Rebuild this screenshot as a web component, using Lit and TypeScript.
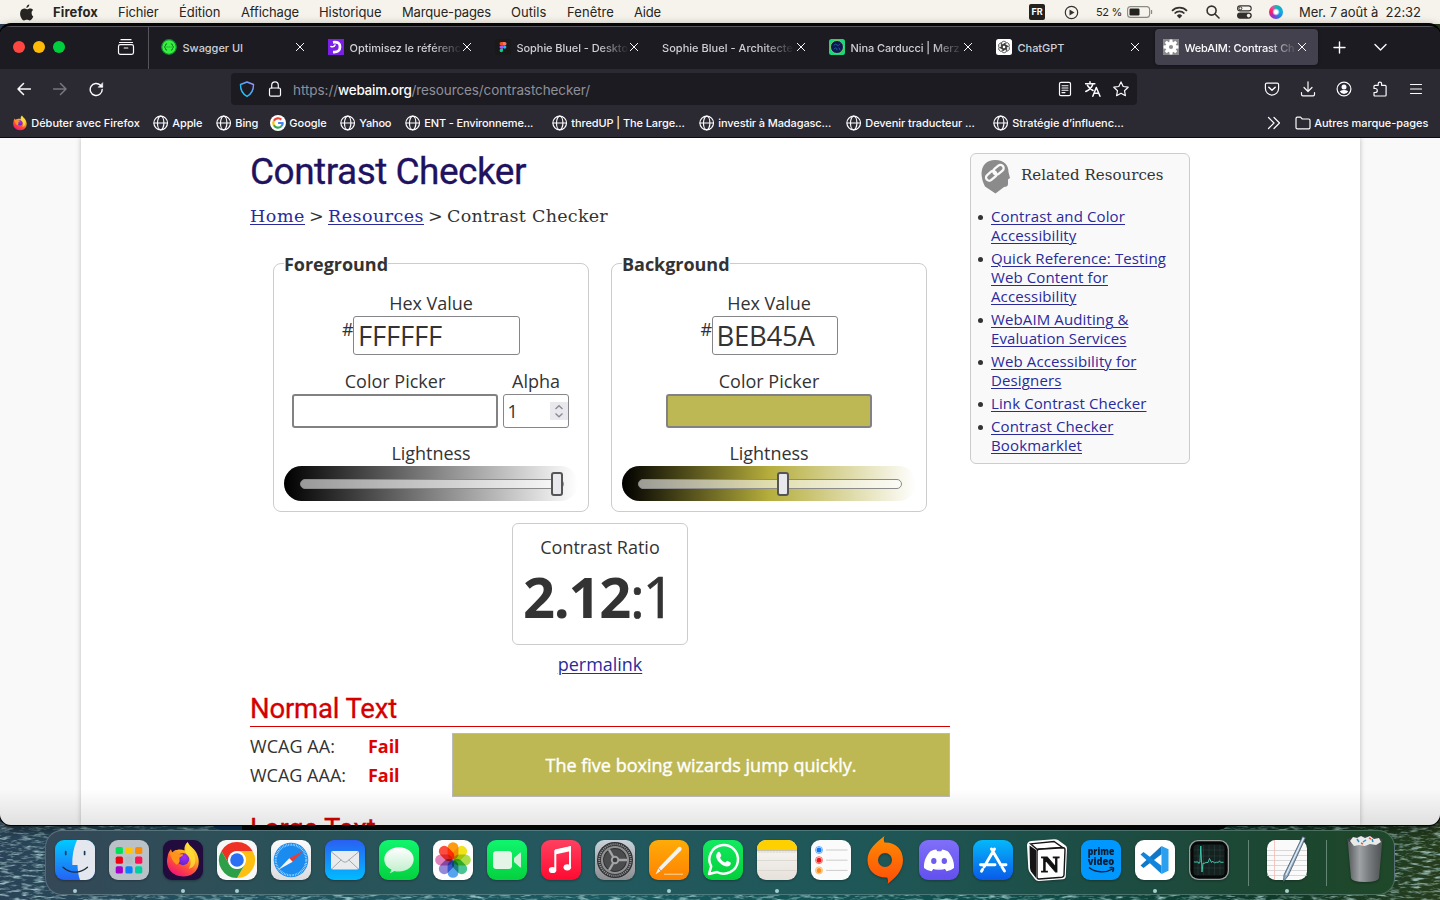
import { LitElement, html, css, svg, nothing } from "lit";
import { customElement, property } from "lit/decorators.js";

/** A single line of text whose tracking is adjusted to span a given width. */
@customElement("fit-text")
class FitText extends LitElement {
  @property() text = "";
  @property({ type: Number }) w = 0;
  static styles = css`
    :host { display: inline-block; white-space: nowrap; }
    .t { white-space: pre; }
  `;
  render() {
    return html`<span class="t">${this.text}</span>`;
  }
  firstUpdated() {
    const span = this.renderRoot.querySelector(".t") as HTMLElement;
    const natural = span.getBoundingClientRect().width;
    if (this.w && natural) span.style.letterSpacing = `${(this.w - natural) / this.text.length}px`;
  }
}
const fit = (text: string, w: number, cls = "") => html`<fit-text class=${cls} .text=${text} .w=${w}></fit-text>`;

const icon = (w: number, h: number, body: unknown) =>
  html`<svg class="ic" width=${w} height=${h} viewBox="0 0 ${w} ${h}" fill="none" stroke="currentColor" stroke-width="1.2" stroke-linecap="round" stroke-linejoin="round">${body}</svg>`;

const closeIcon = icon(10, 10, svg`<path d="M1.300 1.300l7.400 7.400M8.700 1.300l-7.400 7.400" stroke-width="1"/>`);
const globe = icon(16, 16, svg`<circle cx="7.700" cy="8" r="6.800"/><ellipse cx="7.700" cy="8" rx="3.200" ry="6.800"/><path d="M1 8h13.400"/>`);
const firefoxSmall = html`<svg class="ic" width="16" height="16" viewBox="0 0 40 40">${foxBody()}</svg>`;
const google = icon(16, 16, svg`<circle cx="8" cy="8" r="8" fill="#fff" stroke="none"/>
  <g stroke-width="2.2" stroke-linecap="butt"><path d="M11.300 4.600A4.700 4.700 0 0 0 3.900 5.700" stroke="#ea4335"/><path d="M3.900 5.700a4.800 4.800 0 0 0 0 4.700" stroke="#fbbc05"/><path d="M3.900 10.300a4.700 4.700 0 0 0 7.200 1.200" stroke="#34a853"/><path d="M11.100 11.500A4.600 4.600 0 0 0 12.700 8H8.100" stroke="#4285f4"/></g>`);

function foxBody() {
  return svg`
  <defs>
    <linearGradient id="fxa" x1=".8" y1="0" x2=".25" y2="1"><stop offset="0" stop-color="#fff44f"/><stop offset=".35" stop-color="#ffb01f"/><stop offset=".65" stop-color="#ff4f3a"/><stop offset="1" stop-color="#f0107a"/></linearGradient>
    <radialGradient id="fxb" cx=".6" cy=".35" r=".7"><stop offset="0" stop-color="#a52af5"/><stop offset="1" stop-color="#5a25c8"/></radialGradient>
  </defs>
  <path d="M25 1.500c1 4 6 6 9 11 6 11 2 25-13.500 25.500C7 38 .8 27 3.500 17c.5-4 2-6 3.500-8l1.500 3.500c2-2 3-2.500 5-2.500 2.500-1 5.500-.5 8 .5-.5-4 1-7 3.500-9z" fill="url(#fxa)"/>
  <circle cx="20" cy="19.500" r="6.500" fill="url(#fxb)"/>
  <path d="M6 13c4-2 7 0 9 1.500h5c0 2-3 2.500-4 4 1 5-1 6-3 7-4-3-6-8-7-12.500z" fill="#ff9518"/>
  <path d="M26 3c1 7 8 10 7 19-1 5-4 7-7 8 3-5 3-11-2-15-3-3-1-9 2-12z" fill="#ffe037" opacity=".8"/>`;
}

const tile = (body: unknown, bg: string, stops?: [string, string], id = "") => svg`
  ${stops ? svg`<defs><linearGradient id=${id} x1="0" y1="0" x2="0" y2="1"><stop offset="0" stop-color=${stops[0]}/><stop offset="1" stop-color=${stops[1]}/></linearGradient></defs>` : nothing}
  <rect width="40" height="40" rx="9" fill=${stops ? `url(#${id})` : bg}/>${body}`;

const range = (n: number) => Array.from({ length: n }, (_, i) => i);
const padColors = ["#00df55", "#ffc500", "#ff8a00", "#ef0012", "#b3bcc1", "#ff0f55", "#a300c9", "#0a80ff", "#00cfa0"];
const petals = ["#ff9500", "#f2e20a", "#a8dc3a", "#3cc28e", "#4c9df0", "#8f80d8", "#e07ab8", "#ff3f30"];

const dockIcons: { body: unknown; on?: boolean; sep?: boolean }[] = [
  { on: true, body: tile(svg`<path d="M22 0h9a9 9 0 0 1 9 9v22a9 9 0 0 1-9 9h-6c-1.500-4-2.300-9-2.500-15H17.300C17 16 18.500 8 22 0z" fill="#e4e8ee"/>
      <path d="M10.700 11.500v3M29.600 11.500v3" stroke="#173a5c" stroke-width="1.700" stroke-linecap="round"/><path d="M8 27.200c7 6.500 17 6.500 24.500 0" fill="none" stroke="#1d2b3c" stroke-width="1.300" stroke-linecap="round"/>`, "", ["#00caff", "#2563f5"], "gfinder") },
  { body: tile(range(9).map((i) => svg`<rect x=${6.7 + (i % 3) * 9.7} y=${6.9 + Math.floor(i / 3) * 9.7} width="7.200" height="7.200" rx="1.600" fill=${padColors[i]}/>`), "#bac2c7") },
  { on: true, body: svg`<rect width="40" height="40" rx="9" fill="#220b3d"/><g transform="translate(1.300 .7) scale(.94)">${foxBody()}</g>` },
  { on: true, body: tile(svg`<path d="M4.400 11A18 18 0 0 1 35.600 11H20A9 9 0 0 0 12.200 24.500z" fill="#ee3124"/><path d="M35.600 11A18 18 0 0 1 20 38l7.800-13.500A9 9 0 0 0 20 11z" fill="#fdc010"/><path d="M20 38A18 18 0 0 1 4.400 11l7.800 13.500a9 9 0 0 0 15.600 0z" fill="#2c9f48"/><circle cx="20" cy="20" r="8.600" fill="#fff"/><circle cx="20" cy="20" r="6.800" fill="#2b6ff2"/>`, "#f7f7f7") },
  { body: tile(svg`<circle cx="20" cy="20" r="17.300" fill="#1a8cf0"/><circle cx="20" cy="20" r="15.300" fill="none" stroke="#d8efff" stroke-width="2.200" stroke-dasharray=".55 1.050"/><path d="M33 10.500 18.300 18.300l3.400 3.400z" fill="#f03a30"/><path d="M7 30l11.300-11.700 3.400 3.400z" fill="#f4f4f4"/>`, "", ["#fbfbfb", "#dcdcde"], "gsafari") },
  { body: tile(svg`<rect x="6" y="11" width="28" height="18.500" rx="2" fill="#e9ebec"/><path d="M6.500 12 18 21.500q2 1.500 4 0L33.500 12M6.800 28.800l9.500-9M33.200 28.800l-9.500-9" fill="none" stroke="#9ba3a8" stroke-width=".9"/>`, "", ["#2a5ff3", "#00bcff"], "gmail") },
  { body: tile(svg`<path d="M20 7.200c8.300 0 14.700 5.100 14.700 12S28.300 31.500 20 31.500c-1.800 0-3.400-.2-4.900-.6-1.200 1-2.600 1.900-4.400 2.200 1-1.200 1.600-2.200 1.800-3.500C8 27.500 5.300 24 5.300 19.200c0-6.900 6.400-12 14.700-12z" fill="url(#gbub)"/><defs><linearGradient id="gbub" x1="0" y1="0" x2="0" y2="1"><stop offset="0" stop-color="#fff"/><stop offset="1" stop-color="#bfeecb"/></linearGradient></defs>`, "", ["#10f56e", "#04d13e"], "gmsg") },
  { body: tile(svg`<g class="petals">${range(8).map((i) => svg`<rect x="14.600" y="2.200" width="10.800" height="17.500" rx="5.400" fill=${petals[i]} transform="rotate(${i * 45} 20 20)"/>`)}</g>`, "#fdfdfd") },
  { body: tile(svg`<rect x="6" y="11" width="19" height="18" rx="3.500" fill="#e4f5e8"/><path d="M27 18l6-5.300q1-.7 1 .5v13.600q0 1.200-1 .5L27 22z" fill="#d4efd9"/>`, "", ["#10f56e", "#04d13e"], "gft") },
  { body: tile(svg`<path d="M14.300 29V11L29 7.500v19" fill="none" stroke="#fff" stroke-width="2"/><path d="M14 9.500 30 6v5L14 14.500z" fill="#fff"/><ellipse cx="11.600" cy="30" rx="3.800" ry="3.100" fill="#fff"/><ellipse cx="26.300" cy="27.300" rx="3.800" ry="3.100" fill="#fff"/>`, "", ["#ff4060", "#ff0a30"], "gmus") },
  { body: tile(svg`<circle cx="20" cy="20" r="18" fill="#2f3032"/><circle cx="20" cy="20" r="15.800" fill="none" stroke="#8e8f91" stroke-width="2" stroke-dasharray="1.200 .9"/><circle cx="20" cy="20" r="13" fill="none" stroke="#8f9092" stroke-width="2.200"/><circle cx="20" cy="20" r="11" fill="#4a4b4d"/><path d="M20 20h12M20 20l-6-10.400M20 20l-6 10.400" stroke="#a2a4a6" stroke-width="2.300"/><circle cx="20" cy="20" r="4.200" fill="#a2a4a6"/><circle cx="20" cy="20" r="2.300" fill="#3a3a3c"/>`, "", ["#c9d2da", "#8c8d90"], "gset") },
  { on: true, body: tile(svg`<path d="M15 34.200h19" stroke="#ffd9a8" stroke-width="1"/><path d="M6.500 34.500l3-6.500L29.500 7q2-1 3 1 .5 1-.5 2.500L11.500 31z" fill="#f6f3ef"/><path d="M9.500 28l2.300 3" stroke="#b98a5a" stroke-width=".8"/>`, "", ["#ffab08", "#ff8200"], "gpages") },
  { body: tile(svg`<path d="M6 34l2.200-7.700A14.300 14.300 0 1 1 14 32z" fill="none" stroke="#fff" stroke-width="2.500" stroke-linejoin="round"/><path d="M14.500 12.500c1-1.200 2.200-.8 2.700.3l1 2.500c.4 1-1.300 2-1 2.600 1 2 2.800 3.700 4.900 4.500.7.300 1.700-1.800 2.500-1.500l2.700 1.300c1 .6.400 2.400-.5 3.200-1.700 1.400-4 1.200-6.400 0-3-1.500-5.200-3.800-6.500-6.400-1-2.300-1-4.800.6-6.500z" fill="#fff"/>`, "", ["#12ea60", "#04cf3a"], "gwa") },
  { on: true, body: tile(svg`<path d="M0 10V9a9 9 0 0 1 9-9h22a9 9 0 0 1 9 9v1z" fill="#ffd000"/><path d="M0 10.700h40" stroke="#b9b5a5" stroke-width="1"/><path d="M1 12.300h38" stroke="#c5c2ba" stroke-width=".7" stroke-dasharray=".7 .8"/><path d="M0 20.500h40M0 30.500h40" stroke="#d0cdc8" stroke-width=".6"/>`, "", ["#fbfaf7", "#e6e1da"], "gnotes") },
  { body: tile(["#0a78ff", "#f21616", "#ff9015"].map((c, i) => svg`<circle cx="8" cy=${10 + i * 10.2} r="3.500" fill="none" stroke=${c} stroke-width=".6"/><circle cx="8" cy=${10 + i * 10.2} r="2.500" fill=${c}/><path d="M15 ${10 + i * 10.2}h21.500" stroke="#ccc" stroke-width="1"/>`), "#fbfbfb") },
  { body: svg`<defs><linearGradient id="gor" x1="0" y1="0" x2="0" y2="1"><stop offset="0" stop-color="#ff8d00"/><stop offset="1" stop-color="#ff4d0a"/></linearGradient></defs><path d="M19.500-4c-1 2.500-1 4 0 6.500C30 2 38 9 38 20c0 11-8 18-15.500 24 .8-2.500.8-4-.3-6.500C11 38 2.500 31 2.500 20 2.500 9.500 11 2.500 19.500-4zM20 13a7 7 0 1 0 0 14 7 7 0 1 0 0-14z" fill="url(#gor)" fill-rule="evenodd"/>` },
  { body: tile(svg`<path d="M11.500 11.300q3-1.500 5.700-1.800l1 1.800h4l1-1.800q3 .4 5.500 1.800C33 16 35.500 22 35 28q-3.500 2.800-7.500 3.300l-1.800-2.800H14.500l-1.800 2.800Q8.500 31 5 28c-.3-6 1.800-12 6.500-16.700z" fill="#fff"/><ellipse cx="14.800" cy="21" rx="2.700" ry="3" fill="#6b5bf0"/><ellipse cx="25.300" cy="21" rx="2.700" ry="3" fill="#6b5bf0"/><path d="M12.500 27.500q7.500 3 15 0" fill="none" stroke="#fff" stroke-width="1.500"/>`, "", ["#7f6ff8", "#6350ee"], "gdis") },
  { body: tile(svg`<path d="M21.500 9 11 27M18.500 9 27 23.500M29 27l2.500 4M9.500 29.500l-1 1.800M7.500 24.700H22M27.500 24.700H33" stroke="#fff" stroke-width="2.900" stroke-linecap="round"/>`, "", ["#04b8fb", "#0a5ae8"], "gapp") },
  { body: svg`<path d="M0 5.500Q0 1.500 4 1L27-.8q2.500-.2 4 .8l7.500 5.500q1.500 1 1.500 3L38.800 36q0 3-3 3.200L12 41q-2.500.2-4-1.700L2.500 32Q1.500 30.500 1.300 28z" fill="#fff"/><path d="M2.500 5.500 9 10v28l-5-6.500Q3.200 30 3 28z" fill="#151515"/><path d="M3.500 3.900 27 1.500l8.500 6-25.500 1.800z" fill="#fff" stroke="#151515" stroke-width="1.400"/><path d="M10 11.500q0-2 2-2.200l24-1.500q2 0 2 2L37 35q0 2-2 2.300L12 39q-2 0-2-2z" fill="#fff" stroke="#151515" stroke-width="1.400"/><text x="14" y="32" font-family="Liberation Serif, serif" font-weight="bold" font-size="24" textLength="18.500" lengthAdjust="spacingAndGlyphs" fill="#111" stroke="#111" stroke-width=".8">N</text>` },
  { body: tile(svg`<text x="20" y="15.300" text-anchor="middle" font-family="Open Sans, sans-serif" font-weight="800" font-size="9.800" textLength="26.500" lengthAdjust="spacingAndGlyphs" fill="#0b1c2d">prime</text><text x="20" y="25" text-anchor="middle" font-family="Open Sans, sans-serif" font-weight="800" font-size="9.800" textLength="26.500" lengthAdjust="spacingAndGlyphs" fill="#0b1c2d">video</text><path d="M8 27.500c6.500 5.500 17 5.500 23.500 1.500M28.500 27.700q3-.6 4 .2.500 1.500-1 4" fill="none" stroke="#0b1c2d" stroke-width="1.400"/>`, "#0097ff") },
  { on: true, body: tile(svg`<path d="M26.500 6l7 3.200v21.600l-7 3.200z" fill="#2ba0ee"/><path d="M26.500 6v8.300L8.500 28 5.500 25.500z" fill="#1177c8"/><path d="M26.500 34v-8.300L8.500 12 5.500 14.500z" fill="#0f86db"/>`, "#fff") },
  { body: svg`<rect width="40" height="40" rx="9" fill="#9aa09f"/><rect x="1.300" y="1.300" width="37.400" height="37.400" rx="8" fill="#060808"/><rect x="4.500" y="4.500" width="31" height="31" rx="3.500" fill="#14211f"/><path d="M9 5v30M14.500 5v30M20 5v30M25.500 5v30M31 5v30M5 10h30M5 16h30M5 22h30M5 28h30" stroke="#2f4743" stroke-width=".5"/><path d="M5 22h4l1 1.500 1-1.500.8-16L13 32l1-9 1 .5 2-1h2l1.500-4 2 4 1-1.500 2 2 2-.7h2l1-1.500 1 1.500h3" fill="none" stroke="#3fd0b6" stroke-width=".9"/>` },
  { sep: true, on: true, body: svg`<rect width="40" height="40" rx="8.500" fill="#fafafa"/><path d="M0 10.500h40M0 15.500h40M0 20.500h40M0 25.500h40M0 30.500h40M0 35.500h40" stroke="#c9c9cc" stroke-width=".7"/><path d="M7.500 0v40" stroke="#f0b5ab" stroke-width=".7"/><path d="M35.500-3.500l3 1.200L21 36l-4.500 5.500L17 35z" fill="#8fb0cc" stroke="#47525e" stroke-width=".8"/><path d="M36.500-2 19 35" stroke="#e6f0f7" stroke-width="1.200"/>` },
  { sep: true, body: svg`<defs><linearGradient id="gtr" x1="0" y1="0" x2="1" y2="0"><stop offset="0" stop-color="#55585a"/><stop offset=".35" stop-color="#a0a3a5"/><stop offset=".6" stop-color="#7b7e80"/><stop offset="1" stop-color="#4e5153"/></linearGradient></defs><path d="M2.500-1h35L34 38q-1 4-14 4T6 38z" fill="url(#gtr)"/><ellipse cx="20" cy="0" rx="17.500" ry="4" fill="#3f4244"/><path d="M5 1l3-4 4 1 4-2 4 2 5-2 4 3 5-1 2 4-5 3-6-1-5 2-6-1-5 1z" fill="#e9eaea"/><path d="M12-1l2 3M18 2l3-2M27-1l1 3" stroke="#2f8fbf" stroke-width="1.500"/><path d="M16 3l2 1M24-2l2 1" stroke="#e06030" stroke-width="1.500"/>` },
];

@customElement("mac-dock")
class MacDock extends LitElement {
  static styles = css`
    :host { display: flex; box-sizing: border-box; width: 1350px; height: 65px; padding: 0 2px; border-radius: 17px;
      border: 1px solid rgba(160, 190, 190, .35);
      background: linear-gradient(90deg, #344858 0, #2b5158 17%, #23595f 40%, #1f5758 60%, #1d4c42 80%, #1c4630 92%, #1f4729 100%); }
    .slot { width: 54px; display: flex; flex-direction: column; align-items: center; padding-top: 9px; }
    svg { overflow: visible; filter: drop-shadow(0 1px 1px rgba(0, 0, 0, .3)); }
    .petals rect { mix-blend-mode: multiply; opacity: .93; }
    .dot { width: 4px; height: 4px; border-radius: 50%; background: #a5d0d0; margin-top: 9px; }
    .sep { width: 24px; display: flex; justify-content: center; padding-top: 9px; }
    .line { width: 1px; height: 46px; background: rgba(170, 195, 185, .5); }
  `;
  render() {
    return dockIcons.map((d) => html`${d.sep ? html`<div class="sep"><div class="line"></div></div>` : nothing}
      <div class="slot"><svg width="40" height="40" viewBox="0 0 40 40">${d.body}</svg>${d.on ? html`<div class="dot"></div>` : nothing}</div>`);
  }
}

@customElement("menu-bar")
class MenuBar extends LitElement {
  static styles = css`
    :host { display: flex; align-items: center; height: 24px; background: #f6f3ec; color: #262522; font: 13px/24px Inter, sans-serif; }
    .ic { flex: none; display: block; }
    .apple { margin-left: 19px; width: 34px; }
    .menus { display: grid; grid-template-columns: 65px 61px 62px 78px 83px 109px 56px 67px 40px; }
    .menus > :first-child { font-weight: 700; }
    .right { margin-left: auto; display: flex; align-items: center; padding-right: 19px; }
    .fr { width: 16px; height: 16px; background: #23221f; color: #fff; border-radius: 2px; font: 700 9px/16px Inter, sans-serif; text-align: center; margin-right: 19px; }
    .play { margin-right: 17px; }
    .pct { font-size: 11px; margin-right: 5px; }
    .batt { margin-right: 18px; }
    .wifi { margin-right: 18px; }
    .lens { margin-right: 17px; }
    .cc { margin-right: 17px; }
    .siri { width: 14px; height: 14px; border-radius: 50%; background: radial-gradient(circle, #fff 0 18%, transparent 38%), conic-gradient(#10b8b0, #12a8e8 25%, #2a80e0 40%, #a030d0 60%, #ff1e5a 78%, #e850a8 90%, #10b8b0); margin-right: 16px; }
  `;
  render() {
    const menus: [string, number][] = [["Firefox", 45], ["Fichier", 40.5], ["Édition", 41.5], ["Affichage", 58], ["Historique", 62.5], ["Marque-pages", 89], ["Outils", 35.5], ["Fenêtre", 47], ["Aide", 27]];
    return html`
      <div class="apple"><svg class="ic" width="15" height="17" viewBox="0 0 15 17"><path fill="#262522" d="M10.300.6c.1 1.800-1.300 3.300-2.900 3.300C7.200 2.300 8.700.8 10.300.6zM12.600 9c0-1.600.9-2.400 1.500-2.900-.8-1.200-2.100-1.600-3-1.600-1.400 0-2.300.8-3.100.8s-1.700-.7-2.900-.7C3 4.700 1.100 6.400 1.100 9.700c0 3.400 2.300 6.700 3.900 6.700 1.100 0 1.500-.7 2.900-.7s1.700.7 2.800.7c1.600 0 3-2.500 3.600-4-.8-.4-1.700-1.500-1.700-3.400z"/></svg></div>
      <div class="menus">${menus.map(([t, w]) => html`<div>${fit(t, w)}</div>`)}</div>
      <div class="right">
        <div class="fr">FR</div>
        <svg class="ic play" width="15" height="15" viewBox="0 0 15 15"><circle cx="7.500" cy="7.500" r="6.200" fill="none" stroke="#33322f" stroke-width="1.200"/><path d="M5.500 4.500v6l5-3z" fill="#33322f"/></svg>
        <div class="pct">${fit("52 %", 26)}</div>
        <svg class="ic batt" width="26" height="12" viewBox="0 0 26 12"><rect x=".6" y=".6" width="22" height="10.800" rx="3" fill="none" stroke="#8c8a85" stroke-width="1.100"/><rect x="2.500" y="2.500" width="10" height="7" rx="1.200" fill="#23221f"/><path d="M24.500 4v4" stroke="#8c8a85" stroke-width="1.300"/></svg>
        <svg class="ic wifi" width="17" height="13" viewBox="0 0 17 13" fill="none" stroke="#33322f" stroke-width="1.700"><path d="M1 4.800a10.600 10.600 0 0 1 15 0M3.600 7.500a6.900 6.900 0 0 1 9.800 0"/><path d="M5.800 9.700a3.800 3.800 0 0 1 5.400 0L8.500 12.500z" fill="#33322f" stroke="none"/></svg>
        <svg class="ic lens" width="14" height="14" viewBox="0 0 14 14" fill="none" stroke="#33322f" stroke-width="1.600" stroke-linecap="round"><circle cx="5.600" cy="5.600" r="4.500"/><path d="M9 9l4 4"/></svg>
        <svg class="ic cc" width="15" height="14" viewBox="0 0 15 14"><rect x=".6" y=".9" width="13.600" height="5" rx="2.500" fill="none" stroke="#33322f" stroke-width="1.100"/><circle cx="3.400" cy="3.400" r="1.500" fill="none" stroke="#33322f"/><rect y="7.500" width="14.800" height="6.200" rx="3.100" fill="#33322f"/><circle cx="11.600" cy="10.600" r="1.800" fill="#f6f3ec"/></svg>
        <div class="siri"></div>
        ${fit("Mer. 7 août à  22:32", 122)}
      </div>`;
  }
}

const swagger = icon(16, 16, svg`<circle cx="8" cy="8" r="7.300" fill="#35f03c" stroke="#148a35"/><path d="M5.700 4.800q-1.300 0-1.200 1.400 0 1.500-1.200 1.800 1.200.3 1.200 1.800 0 1.400 1.200 1.400M10.300 4.800q1.300 0 1.200 1.400 0 1.500 1.200 1.800-1.200.3-1.200 1.800 0 1.400-1.200 1.400M6 8h.1M8 8h.1M10 8h.1" stroke="#14502a" stroke-width=".8"/>`);
const ocr = icon(16, 16, svg`<rect width="16" height="16" fill="#7a1ee8" stroke="none"/><path d="M5 3.300q7-1 7 4.700 0 5.500-7 5" stroke="#fff" stroke-width="2.700" stroke-linecap="butt"/><path d="M3 7.500q3 1 4-1.500" stroke="#fff" stroke-width="1.600"/>`);
const figma = icon(16, 16, svg`<g stroke="none"><rect width="16" height="16" rx="3" fill="#191919"/><path d="M8 3H6.200a1.700 1.700 0 0 0 0 3.400H8z" fill="#f24e1e"/><path d="M8 3h1.800a1.700 1.700 0 0 1 0 3.400H8z" fill="#ff7262"/><path d="M8 6.400H6.200a1.700 1.700 0 0 0 0 3.400H8z" fill="#a259ff"/><circle cx="9.700" cy="8.100" r="1.700" fill="#1abcfe"/><path d="M8 9.800H6.200A1.700 1.700 0 1 0 8 11.500z" fill="#0acf83"/></g>`);
const nina = icon(16, 16, svg`<rect width="16" height="16" rx="2.500" fill="#19d87c" stroke="none"/><circle cx="8" cy="8" r="6.500" fill="#0d1553" stroke="#a8d060" stroke-width=".8"/><path d="M5 6q2-2 3 0t3-1M5 10q3-3 3 1M10 9l1 2" stroke="#1f6a90" stroke-width=".9"/>`);
const gpt = icon(16, 16, svg`<rect width="16" height="16" rx="2.500" fill="#fff" stroke="none"/><g stroke="#222" stroke-width=".7">${range(6).map((i) => svg`<path d="M5.300 8.700V5q0-2.600 2.500-2.800 1.300 0 2.200 1M6.300 8.900 6.300 6.500 9.500 4.700" transform="rotate(${i * 60} 8 8)"/>`)}</g>`);
const gear = icon(16, 16, svg`<rect width="16" height="16" fill="#8b8b8b" stroke="none"/><g stroke="none"><circle cx="8" cy="8" r="5.300" fill="#fff"/>${range(8).map((i) => svg`<path d="M6.600.6h2.800l.5 4H6.100z" fill="#fff" transform="rotate(${i * 45} 8 8)"/>`)}<circle cx="8" cy="8" r="2.100" fill="#8b8b8b"/></g>`);

const tabs: { ic?: unknown; t: string; w: number; fade?: boolean; on?: boolean }[] = [
  { ic: swagger, t: "Swagger UI", w: 60.5 },
  { ic: ocr, t: "Optimisez le référenc", w: 111.5, fade: true },
  { ic: figma, t: "Sophie Bluel - Deskto", w: 111.5, fade: true },
  { t: "Sophie Bluel - Architecte", w: 131, fade: true },
  { ic: nina, t: "Nina Carducci | Merz", w: 109, fade: true },
  { ic: gpt, t: "ChatGPT", w: 47 },
  { ic: gear, t: "WebAIM: Contrast Ch", w: 110, fade: true, on: true },
];
const marks: [unknown, string, number][] = [
  [firefoxSmall, "Débuter avec Firefox", 108.5], [globe, "Apple", 30], [globe, "Bing", 23], [google, "Google", 37.5], [globe, "Yahoo", 32],
  [globe, "ENT - Environneme...", 109], [globe, "thredUP | The Large...", 113.5], [globe, "investir à Madagasc...", 113], [globe, "Devenir traducteur ...", 109.5], [globe, "Stratégie d’influenc...", 111.5],
];

@customElement("browser-chrome")
class BrowserChrome extends LitElement {
  static styles = css`
    :host { display: block; background: #2b2a33; color: #fbfbfe; font: 500 11px/16px Inter, sans-serif; }
    .ic { flex: none; display: block; }
    .tabs { display: flex; align-items: center; height: 43px; background: #1c1b22; border-top: 1px solid #56555c; box-sizing: border-box; padding-bottom: 2px; }
    .lights { display: flex; gap: 8px; margin-left: 13px; }
    .light { width: 12px; height: 12px; border-radius: 50%; }
    .r { background: #ff4640; } .y { background: #ffba08; } .g { background: #00cf3d; }
    .view { margin-left: 52px; }
    .rule { width: 1px; height: 42px; margin: 0 4px -2px 13px; background: #55545c; }
    .strip { display: flex; gap: 4px; }
    .tab { box-sizing: border-box; width: 163px; height: 36px; padding: 0 11px 0 8px; display: flex; align-items: center; color: #cfcfd4; border-radius: 4px; }
    .tab .x { margin-left: auto; color: #fbfbfe; }
    .title { flex: none; width: 112px; margin-left: 5.500px; line-height: 17px; padding-top: 2px; }
    .title.wide { width: 132px; margin-left: 0; }
    .fade { -webkit-mask-image: linear-gradient(90deg, #000 calc(100% - 30px), transparent 100%); mask-image: linear-gradient(90deg, #000 calc(100% - 30px), transparent 100%); }
    .tab.on { background: #42414d; color: #fbfbfe; box-shadow: 0 0 3px rgba(0, 0, 0, .5); }
    .plus { margin-left: 15px; } .chev { margin-left: 28px; }
    .nav { display: flex; align-items: center; height: 40px; }
    .back { margin-left: 17px; } .fwd { margin-left: 22px; color: #77767e; } .reload { margin-left: 22px; }
    .url { margin-left: 127px; box-sizing: border-box; width: 906px; height: 32px; border-radius: 4px; background: #1c1b22; display: flex; align-items: center; padding: 0 8px 0 8px; }
    .lock { margin-left: 13px; }
    .addr { margin-left: 11px; font-size: 13.500px; font-weight: 400; color: #8f8f98; padding-top: 2px; }
    .host { color: #fbfbfe; font-weight: 500; }
    .actions { margin-left: auto; display: flex; gap: 12px; }
    .tools { display: flex; gap: 20px; margin-left: 127px; }
    .marks { display: flex; align-items: center; height: 28px; padding-left: 12px; border-bottom: 1px solid #0c0c0d; }
    .grid { display: grid; grid-template-columns: 141px 63px 54px 70px 65px 147px 147px 147px 147px 140px; }
    .mark { display: flex; align-items: center; gap: 3.300px; }
    .more { margin-left: 134px; margin-right: 14px; }
  `;
  render() {
    return html`
      <div class="tabs">
        <div class="lights"><div class="light r"></div><div class="light y"></div><div class="light g"></div></div>
        <div class="view">${icon(18, 18, svg`<path d="M4 1.700h10M2.500 4.500h13"/><rect x="1.500" y="6.600" width="15" height="9.800" rx="1.800"/><path d="M7.200 10h3.600"/>`)}</div>
        <div class="rule"></div>
        <div class="strip">${tabs.map((t) => html`<div class="tab ${t.on ? "on" : ""}">${t.ic ?? nothing}<div class="title ${t.fade ? "fade" : ""} ${t.ic ? "" : "wide"}">${fit(t.t, t.w)}</div><div class="x">${closeIcon}</div></div>`)}</div>
        <div class="plus">${icon(13, 13, svg`<path d="M6.500 1v11M1 6.500h11" stroke-width="1.400"/>`)}</div>
        <div class="chev">${icon(13, 13, svg`<path d="M1 3.500l5.500 5.500L12 3.500" stroke-width="1.400"/>`)}</div>
      </div>
      <div class="nav">
        <div class="back">${icon(14, 14, svg`<path d="M13.500 7H1M6.500 1.500 1 7l5.500 5.500" stroke-width="1.500"/>`)}</div>
        <div class="fwd">${icon(14, 14, svg`<path d="M.5 7H13M7.500 1.500 13 7l-5.500 5.500" stroke-width="1.500"/>`)}</div>
        <div class="reload">${icon(15, 15, svg`<path d="M13.200 7.500A6 6 0 1 1 11.500 3.300l1.500 1.500" stroke-width="1.400"/><path d="M13.700 1v4.200H9.500z" fill="currentColor" stroke-width=".6"/>`)}</div>
        <div class="url">
          <svg class="ic" width="16" height="16" viewBox="0 0 16 16"><defs><linearGradient id="sh" x1="1" y1="0" x2="0" y2="1"><stop offset="0" stop-color="#a68bff"/><stop offset=".6" stop-color="#2fb4f5"/><stop offset="1" stop-color="#20d0ff"/></linearGradient></defs><path d="M8 1 14.500 3.500C14.600 9 12.500 13 8 15.300 3.500 13 1.400 9 1.500 3.500z" fill="none" stroke="url(#sh)" stroke-width="1.400" stroke-linejoin="round"/></svg>
          <div class="lock">${icon(14, 16, svg`<rect x="1.500" y="7" width="11" height="8.200" rx="1.500"/><path d="M3.700 7V4.200a3.300 3.300 0 0 1 6.600 0V7"/>`)}</div>
          <div class="addr">${fit("https://", 45)}<span class="host">${fit("webaim.org", 73.5)}</span>${fit("/resources/contrastchecker/", 178.5)}</div>
          <div class="actions">
            ${icon(16, 16, svg`<rect x="2.500" y="1.300" width="11" height="13.400" rx="1.500"/><path d="M5 4.700h6M5 7h6M5 9.300h6M5 11.600h3" stroke-width="1.100"/>`)}
            ${icon(16, 16, svg`<path d="M.5 2.700h9.300M5 .8v1.900M8 2.700C7 6 4 9 .8 10.500M2.500 4.500C4 7 6 8.500 8 9.500M7.800 15.200l3.500-8.700 3.700 8.700M9 12.300h4.800" stroke-width="1.500"/>`)}
            ${icon(16, 16, svg`<path d="M8 .9l2.200 4.600 5 .7-3.700 3.500.9 5L8 12.300l-4.400 2.400.9-5L.8 6.200l5-.7z"/>`)}
          </div>
        </div>
        <div class="tools">
          ${icon(16, 16, svg`<path d="M2.800 2.200h10.400q1.400 0 1.400 1.400V7.500a6.600 6.600 0 0 1-13.200 0V3.600q0-1.400 1.400-1.400z"/><path d="M4.800 6.300 8 9.300l3.200-3" stroke-width="1.500"/>`)}
          ${icon(16, 16, svg`<path d="M8 .8v9.500M4 6.500l4 4 4-4M1.500 11.500v2q0 1.400 1.400 1.400h10.200q1.400 0 1.400-1.400v-2"/>`)}
          ${icon(16, 16, svg`<circle cx="8" cy="8" r="6.900"/><circle cx="8" cy="5.900" r="2.500" fill="currentColor" stroke="none"/><path d="M3.800 10.200q4.200-2.400 8.400 0-1.200 2.800-4.200 2.800t-4.200-2.800z" fill="currentColor" stroke="none"/>`)}
          ${icon(16, 16, svg`<path d="M2 7.500V5.200q0-.9.900-.9h3.300V2.800a1.700 1.700 0 0 1 3.400 0v1.500h3.600q.9 0 .9.900v8.900q0 .9-.9.900H2.900q-.9 0-.9-.9v-2.600h1.300a2 2 0 0 0 0-4z"/>`)}
          ${icon(16, 16, svg`<path d="M2.500 3.500h11M2.500 8h11M2.500 12.500h11"/>`)}
        </div>
      </div>
      <div class="marks">
        <div class="grid">${marks.map(([i, t, w]) => html`<div class="mark">${i}${fit(t, w)}</div>`)}</div>
        <div class="more">${icon(14, 14, svg`<path d="M1.500 1.500 7 7l-5.500 5.500M7 1.500 12.500 7 7 12.500"/>`)}</div>
        <div class="mark">${icon(16, 16, svg`<path d="M1 12.500v-9q0-1.300 1.300-1.300h3.200L7.300 4h6.400Q15 4 15 5.300v7.200q0 1.300-1.300 1.300H2.300Q1 13.800 1 12.500z"/>`)}${fit("Autres marque-pages", 114)}</div>
      </div>`;
  }
}

const links: [string, number][][] = [
  [["Contrast and Color", 134], ["Accessibility", 85.5]],
  [["Quick Reference: Testing", 175], ["Web Content for", 117], ["Accessibility", 85.5]],
  [["WebAIM Auditing &", 137.5], ["Evaluation Services", 135.5]],
  [["Web Accessibility for", 145.5], ["Designers", 70.5]],
  [["Link Contrast Checker", 155.5]],
  [["Contrast Checker", 122.5], ["Bookmarklet", 91]],
];

@customElement("web-page")
class WebPage extends LitElement {
  static styles = css`
    :host { display: block; height: 687px; overflow: hidden; background: #f9f9f9; color: #333; font: 18px/24px "Open Sans", sans-serif; }
    .sheet { width: 1279px; height: 687px; margin: 0 auto 0 81px; background: #fff; box-shadow: 0 0 5px rgba(0, 0, 0, .25); display: flex; }
    .main { width: 700px; margin-left: 169px; }
    .h1 { font: 37px/48px Roboto, sans-serif; color: #20125f; padding-top: 10px; height: 47px; -webkit-text-stroke: .3px #20125f; }
    .crumbs { font: 17.500px/24px "DejaVu Serif", serif; padding-top: 9px; height: 24px; display: flex; }
    .lnk { color: #2a2a9c; text-decoration: underline; text-decoration-thickness: 1px; text-underline-offset: 2px; }
    .gt { width: 19px; margin-left: 4px; }
    .sets { display: flex; gap: 22px; padding: 25px 0 0 23px; }
    .set { box-sizing: border-box; width: 316px; height: 259px; margin: 0; padding: 0 10px; border: 1px solid #ccc; border-radius: 8px; display: block; }
    .legend { padding: 0; font-weight: 700; line-height: 23px; height: 21px; }
    .lab { text-align: center; height: 25px; }
    .hexlab { margin-top: 17px; }
    .hexrow { display: flex; height: 39px; justify-content: center; line-height: 26px; }
    .input { box-sizing: border-box; border: 1px solid #85858a; border-radius: 3px; background: #fff; padding-left: 4px; }
    .hex { height: 39px; font-size: 27.500px; line-height: 38px; }
    .w1 { width: 167px; } .w2 { width: 126px; }
    .cols { display: flex; justify-content: center; gap: 5px; margin-top: 14px; }
    .pair { padding-right: 2px; }
    .pair .lab { padding-left: 1px; }
    .pick { box-sizing: border-box; width: 206px; height: 34px; border: 2px solid #828282; border-radius: 3px; background: #fff; }
    .olive { background: #beb854; }
    .alpha { width: 66px; height: 34px; display: flex; align-items: center; justify-content: space-between; line-height: 32px; }
    .spin { width: 18px; height: 18px; background: #e9e9ed; display: flex; justify-content: center; }
    .light { margin-top: 13px; }
    .slider { box-sizing: border-box; height: 35px; border-radius: 17.500px; padding: 13px 14px 0 16px; background: linear-gradient(90deg, #000, #808080 50%, #fff); }
    .slider.ol { background: linear-gradient(90deg, #000, #b5ad3c 50%, #fff); }
    .track { position: relative; box-sizing: border-box; height: 10px; width: 264px; border: 1px solid #8b8b8b; border-radius: 5px; background: rgba(255, 255, 255, .58); }
    .thumb { position: absolute; box-sizing: border-box; top: -8px; width: 12px; height: 24px; border: 2px solid #555; border-radius: 3px; background: #e9e9ed; }
    .t1 { left: 250px; } .t2 { left: 138px; }
    .ratio { box-sizing: border-box; width: 176px; height: 122px; margin: 11px auto 0; border: 1px solid #ccc; border-radius: 6px; text-align: center; padding-top: 11px; }
    .num { font-size: 56px; line-height: 74px; display: flex; padding-left: 10px; }
    .num b { font-weight: 700; }
    .unit { -webkit-text-stroke: .7px #333; }
    .perma { text-align: center; margin-top: 7px; height: 25px; }
    .h2 { font: 27.500px/38px Roboto, sans-serif; color: #d40000; border-bottom: 1px solid #d40000; height: 36px; -webkit-text-stroke: .3px #d40000; }
    .normal, .large { margin-top: 13px; }
    .res { display: flex; padding-top: 6px; height: 64px; }
    .rows { width: 202px; display: grid; grid-template-columns: 118px auto; grid-template-rows: 29px 29px; line-height: 26px; }
    .fail { color: #e00000; font-weight: 700; }
    .sample { box-sizing: border-box; width: 498px; height: 64px; border: 1px solid #bbb; background: #beb854; color: #fff; text-align: center; line-height: 63px; -webkit-text-stroke: .4px #fff; }
    .side { box-sizing: border-box; width: 220px; height: 311px; margin: 15px 0 0 20px; border: 1px solid #ccc; border-radius: 6px; background: #f9f9f9; }
    .head { box-sizing: border-box; display: flex; height: 53px; padding: 4px 0 0 9px; font: 15px/34px "DejaVu Serif", serif; }
    .head svg { margin: 1px 8px 0 0; }
    .list { list-style: none; margin: 0; padding: 0 0 0 20px; font-size: 15px; line-height: 19px; }
    .list li { display: flex; flex-direction: column; margin-bottom: 4px; }
    .line { height: 19px; position: relative; }
    .first::before { content: ""; position: absolute; left: -13px; top: 8px; width: 5px; height: 5px; border-radius: 50%; background: #333; }
  `;
  private set(title: string, tw: number, hex: string, hw: number, fg: boolean) {
    return html`<fieldset class="set"><legend class="legend">${fit(title, tw)}</legend>
      <div class="lab hexlab">${fit("Hex Value", 83.5)}</div>
      <div class="hexrow">${fit("#", 11)}<div class="input hex ${fg ? "w1" : "w2"}">${fit(hex, hw)}</div></div>
      <div class="cols ${fg ? "pair" : ""}">
        <div><div class="lab">${fit("Color Picker", 100.5)}</div><div class="pick ${fg ? "" : "olive"}"></div></div>
        ${fg ? html`<div><div class="lab">${fit("Alpha", 48)}</div><div class="input alpha"><span>1</span><div class="spin"><svg width="12" height="18" viewBox="0 0 12 18"><path d="M2.500 7 6 3.800 9.500 7M2.500 11.500 6 14.700l3.500-3.200" fill="none" stroke="#8a8a94" stroke-width="1.400"/></svg></div></div></div>` : nothing}
      </div>
      <div class="lab light">${fit("Lightness", 79)}</div>
      <div class="slider ${fg ? "" : "ol"}"><div class="track"><div class="thumb ${fg ? "t1" : "t2"}"></div></div></div>
    </fieldset>`;
  }
  render() {
    return html`<div class="sheet">
      <div class="main">
        <div class="h1">${fit("Contrast Checker", 276)}</div>
        <div class="crumbs">${fit("Home", 55, "lnk")}<span class="gt">${fit(">", 13)}</span>${fit("Resources", 96, "lnk")}<span class="gt">${fit(">", 13)}</span>${fit("Contrast Checker", 161)}</div>
        <div class="sets">${this.set("Foreground", 104, "FFFFFF", 84, true)}${this.set("Background", 107.5, "BEB45A", 98, false)}</div>
        <div class="ratio"><div>${fit("Contrast Ratio", 119.5)}</div><div class="num"><b>${fit("2.12", 107)}</b><span class="unit">${fit(":1", 43)}</span></div></div>
        <div class="perma">${fit("permalink", 84.5, "lnk")}</div>
        <div class="h2 normal">${fit("Normal Text", 147)}</div>
        <div class="res"><div class="rows">${fit("WCAG AA:", 85)}<span class="fail">${fit("Fail", 31.5)}</span>${fit("WCAG AAA:", 96)}<span class="fail">${fit("Fail", 31.5)}</span></div>
          <div class="sample">${fit("The five boxing wizards jump quickly.", 311)}</div></div>
        <div class="h2 large">${fit("Large Text", 125.5)}</div>
      </div>
      <div class="side">
        <div class="head"><svg width="33" height="36" viewBox="0 0 33 36"><path d="M5 27.500Q1.500 21 1.500 14 2.500 1.500 15 1c10 0 13.500 6 13.500 12l1.500 6-2 1.500V25q0 3-4 3l-8.500 6.500z" fill="#8b8b8b"/><g transform="rotate(-40 15 14)" fill="none" stroke="#f9f9f9" stroke-width="2.300"><rect x="4.500" y="10.500" width="11.500" height="6.500" rx="3.200"/><rect x="14" y="10.500" width="11.500" height="6.500" rx="3.200"/></g></svg>${fit("Related Resources", 142.5)}</div>
        <ul class="list">${links.map((l) => html`<li>${l.map(([t, w], i) => html`<div class="line ${i ? "" : "first"}">${fit(t, w, "lnk")}</div>`)}</li>`)}</ul>
      </div>
    </div>`;
  }
}

@customElement("app-root")
class AppRoot extends LitElement {
  static styles = css`
    :host { display: block; position: relative; width: 1440px; height: 900px; overflow: hidden; background: #10343c; }
    .sea { position: absolute; left: 0; top: 24px; width: 1440px; height: 876px; background: linear-gradient(90deg, #2a4256 0, #22525f 15%, #17595e 45%, #0f4f4c 70%, #0e3a2a 88%, #263c1c 100%); }
    .waves { position: absolute; left: 0; top: 820px; opacity: .75; }
    .bar { position: relative; }
    .behind { position: absolute; left: 211px; top: 815px; width: 1018px; height: 15px; border-radius: 0 0 10px 10px; background: linear-gradient(90deg, #0d3a66 0 31px, #050708 31px); }
    .window { position: relative; width: 1440px; height: 801px; box-sizing: border-box; border-top: 2px solid #050505; border-radius: 11px; overflow: hidden; box-shadow: 0 0 0 1px #050505, 0 4px 12px rgba(0, 0, 0, .6); background: #2b2a33; display: flex; flex-direction: column; }
    .shade { position: absolute; left: 0; bottom: 0; width: 100%; height: 36px; background: linear-gradient(180deg, rgba(0, 0, 0, 0), rgba(0, 0, 0, .1)); }
    .dock { position: absolute; left: 45px; top: 830px; }
  `;
  render() {
    return html`
      <div class="sea"></div>
      <svg class="waves" width="1440" height="80"><filter id="wv" x="0" y="0" width="100%" height="100%"><feTurbulence type="fractalNoise" baseFrequency=".09 .38" numOctaves="3" seed="7"/><feColorMatrix values="0 0 0 0 .5  0 0 0 0 .75  0 0 0 0 .76  2.600 1.500 0 0 -1.950"/></filter><rect width="1440" height="80" filter="url(#wv)"/></svg>
      <menu-bar class="bar"></menu-bar>
      <div class="behind"></div>
      <div class="window"><browser-chrome></browser-chrome><web-page></web-page><div class="shade"></div></div>
      <mac-dock class="dock"></mac-dock>`;
  }
}
